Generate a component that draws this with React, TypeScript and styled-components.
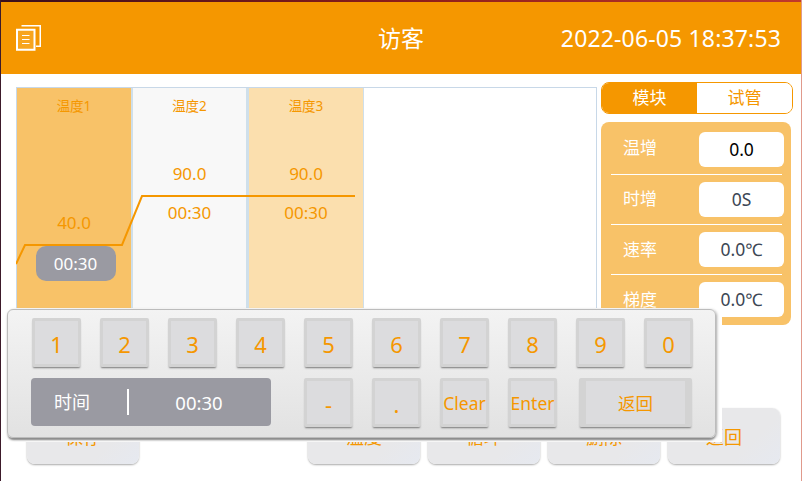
import React from "react";
import styled, { createGlobalStyle } from "styled-components";

const ORANGE = "#f59700";
const FONT = `"Noto Sans", "Noto Sans CJK SC", sans-serif`;

const Global = createGlobalStyle`
  html, body { margin: 0; padding: 0; background: #fff; }
  * { box-sizing: border-box; }
`;

const Screen = styled.div`
  position: relative;
  width: 802px;
  height: 481px;
  overflow: hidden;
  background: #fff;
  font-family: ${FONT};
  border-left: 1px solid #3c1a2a;
  border-right: 1px solid #e09a8c;
  display: flex;
  flex-direction: column;
`;

const TopEdge = styled.div`
  height: 2px;
  margin-left: -1px;
  background: linear-gradient(90deg, #3a0f1c, #8c1d1a 50%, #c0392b);
`;

const Header = styled.header`
  height: 72px;
  background: ${ORANGE};
  color: #fff;
  display: grid;
  grid-template-columns: 1fr auto 1fr;
  align-items: center;
  padding: 0 20px;
`;

const Title = styled.div`
  font-size: 23px;
  line-height: 28px;
  margin-top: -1px;
`;

const Clock = styled.div`
  justify-self: end;
  font-size: 23px;
  letter-spacing: 0.15px;
  line-height: 28px;
  margin-top: -1px;
  white-space: nowrap;
`;

const Main = styled.main`
  flex: 1;
  display: grid;
  grid-template-columns: 581px 192px;
  grid-template-rows: 326px auto;
  column-gap: 4px;
  padding: 8px 0 0 15px;
  align-items: start;
`;

const Chart = styled.div`
  position: relative;
  margin-top: 5px;
  height: 312px;
  border: 1px solid #c8d8e8;
  display: flex;
`;

const Column = styled.div<{ $bg: string; $width: number; $rule: number }>`
  width: ${(p) => p.$width}px;
  background: ${(p) => p.$bg};
  border-right: ${(p) => p.$rule}px solid #cfdfea;
  color: ${ORANGE};
  display: flex;
  flex-direction: column;
  align-items: center;
  text-align: center;
`;

const ColTitle = styled.div`
  margin-top: 8px;
  font-size: 13.5px;
  line-height: 20px;
  height: 20px;
`;

const ColValue = styled.div<{ $top: number }>`
  margin-top: ${(p) => p.$top}px;
  font-size: 17px;
  line-height: 22px;
`;

const ColTime = styled.div`
  margin-top: 17px;
  font-size: 17px;
  line-height: 22px;
`;

const Pill = styled.div`
  margin-top: 12px;
  margin-left: 3px;
  width: 80px;
  height: 35px;
  border-radius: 10px;
  background: #9a9aa2;
  color: #fff;
  font-size: 17px;
  line-height: 35px;
`;

const ChartLine = styled.svg`
  position: absolute;
  left: -1px;
  top: -1px;
  pointer-events: none;
`;

const Actions = styled.div`
  grid-column: 1 / -1;
  margin-left: 11px;
  display: flex;
`;

const ActionButton = styled.button<{ $gap?: number }>`
  flex: none;
  width: 112px;
  height: 56px;
  margin-left: ${(p) => p.$gap ?? 8}px;
  border: 0;
  border-radius: 8px;
  background: linear-gradient(135deg, #e8e8ea, #e8e8ea 70%, #e6e9f0);
  box-shadow: 0 1px 2px #aaa;
  color: ${ORANGE};
  font-family: ${FONT};
  font-size: 18px;
  padding: 0;
`;

const Side = styled.aside`
  display: flex;
  flex-direction: column;
  gap: 8px;
`;

const Tabs = styled.div`
  width: 192px;
  height: 32px;
  border: 1px solid ${ORANGE};
  border-radius: 8px;
  overflow: hidden;
  display: flex;
`;

const Tab = styled.div<{ $active?: boolean }>`
  flex: 1;
  background: ${(p) => (p.$active ? ORANGE : "#fff")};
  color: ${(p) => (p.$active ? "#fff" : ORANGE)};
  font-size: 17px;
  line-height: 30px;
  text-align: center;
`;

const Params = styled.div`
  width: 190px;
  height: 203px;
  border-radius: 8px;
  background: #f8c268;
  padding: 10px 7px 0 10px;
`;

const ParamRow = styled.div`
  height: 50px;
  padding-bottom: 15px;
  padding-left: 12px;
  display: flex;
  align-items: center;
  justify-content: space-between;
  position: relative;
  &:not(:last-child)::after {
    content: "";
    position: absolute;
    left: 0;
    right: 2px;
    bottom: 7px;
    height: 1px;
    background: #fff;
  }
`;

const ParamLabel = styled.div<{ $lift: number }>`
  color: #fff;
  font-size: 17px;
  line-height: 24px;
  padding-bottom: ${(p) => p.$lift}px;
`;

const ParamValue = styled.div<{ $strong?: boolean }>`
  width: 85px;
  height: 35px;
  border-radius: 6px;
  background: #fff;
  color: ${(p) => (p.$strong ? "#000" : "#3c4654")};
  font-size: 17.5px;
  line-height: 35px;
  text-align: center;
`;

const Overlay = styled.div`
  position: absolute;
  left: 0;
  top: 308px;
  width: 721px;
  height: 134px;
  background: #fff;
  padding: 1px 6px 4px 6px;
`;

const Keypad = styled.div`
  height: 129px;
  border: 1px solid #bcbcbc;
  border-radius: 6px;
  background: linear-gradient(180deg, #f3f3f3, #e2e2e2);
  box-shadow: 0 3px 2px -1px #8c8c8c, 1px 1px 3px #aaa;
  padding: 8px 0 0 24px;
  display: flex;
  flex-direction: column;
  gap: 11px;
`;

const KeyRow = styled.div`
  display: flex;
  gap: 19px;
`;

const Key = styled.button<{ $wide?: boolean; $small?: boolean; $offset?: number }>`
  flex: none;
  width: ${(p) => (p.$wide ? 113 : 49)}px;
  height: 49px;
  margin-left: ${(p) => p.$offset ?? 0}px;
  padding: 2px 0 0;
  border: solid #d3d3d3;
  border-width: 3px ${(p) => (p.$wide ? "7px" : "3px")};
  border-radius: 2px;
  background: #dcdcde;
  box-shadow: 0 2px 2px -1px #777;
  color: ${ORANGE};
  font-family: ${FONT};
  font-size: ${(p) => (p.$small ? 17.5 : 22)}px;
  line-height: 1;
  white-space: nowrap;
  display: flex;
  align-items: center;
  justify-content: center;
`;

const Display = styled.div`
  width: 240px;
  height: 48px;
  margin-left: -1px;
  margin-right: 14px;
  border-radius: 4px;
  background: #9a9aa2;
  color: #fff;
  font-size: 18px;
  display: flex;
  align-items: center;
`;

const DisplayLabel = styled.div`
  width: 96px;
  padding-right: 14px;
  text-align: center;
  padding-bottom: 2px;
`;

const DisplayDivider = styled.div`
  width: 2px;
  height: 26px;
  background: #fff;
`;

const DisplayValue = styled.div`
  flex: 1;
  font-size: 18.5px;
  text-align: center;
  padding-right: 2px;
`;

const IconSlot = styled.svg`
  margin-left: -5px;
`;

const DocIcon = () => (
  <IconSlot width="25" height="26" viewBox="0 0 25 26" fill="none" stroke="#fff">
    <path d="M5.5 .75H24.25V21.25H20" strokeWidth="1.5" />
    <rect x="1" y="4.75" width="17.5" height="20" strokeWidth="2" fill="#f7a51e" />
    <path d="M6 10.5H13.5M6 14.5H13.5M6 18.5H13.5" strokeWidth="1.2" />
  </IconSlot>
);

const params = [
  { label: "温增", value: "0.0", strong: true, lift: 4 },
  { label: "时增", value: "0S", lift: 2 },
  { label: "速率", value: "0.0℃", lift: 0 },
  { label: "梯度", value: "0.0℃", lift: 0 },
];

export default function App() {
  return (
    <Screen>
      <Global />
      <TopEdge />
      <Header>
        <DocIcon />
        <Title>访客</Title>
        <Clock>2022-06-05 18:37:53</Clock>
      </Header>
      <Main>
        <Chart>
          <Column $bg="#f8c268" $width={116} $rule={2}>
            <ColTitle>温度1</ColTitle>
            <ColValue $top={96}>40.0</ColValue>
            <Pill>00:30</Pill>
          </Column>
          <Column $bg="#f8f8f8" $width={116} $rule={3}>
            <ColTitle>温度2</ColTitle>
            <ColValue $top={47}>90.0</ColValue>
            <ColTime>00:30</ColTime>
          </Column>
          <Column $bg="#fbdfae" $width={115} $rule={1}>
            <ColTitle>温度3</ColTitle>
            <ColValue $top={47}>90.0</ColValue>
            <ColTime>00:30</ColTime>
          </Column>
          <ChartLine width="360" height="200" viewBox="0 0 360 200" fill="none">
            <path d="M0 177L9 158H106L126 109H339" stroke={ORANGE} strokeWidth="2" />
          </ChartLine>
        </Chart>
        <Side>
          <Tabs>
            <Tab $active>模块</Tab>
            <Tab>试管</Tab>
          </Tabs>
          <Params>
            {params.map((p) => (
              <ParamRow key={p.label}>
                <ParamLabel $lift={p.lift}>{p.label}</ParamLabel>
                <ParamValue $strong={p.strong}>{p.value}</ParamValue>
              </ParamRow>
            ))}
          </Params>
        </Side>
        <Actions>
          <ActionButton $gap={0}>保存</ActionButton>
          <ActionButton $gap={169}>温度</ActionButton>
          <ActionButton>循环</ActionButton>
          <ActionButton>删除</ActionButton>
          <ActionButton>返回</ActionButton>
        </Actions>
      </Main>
      <Overlay>
        <Keypad>
          <KeyRow>
            {["1", "2", "3", "4", "5", "6", "7", "8", "9", "0"].map((k) => (
              <Key key={k}>{k}</Key>
            ))}
          </KeyRow>
          <KeyRow>
            <Display>
              <DisplayLabel>时间</DisplayLabel>
              <DisplayDivider />
              <DisplayValue>00:30</DisplayValue>
            </Display>
            <Key>-</Key>
            <Key>.</Key>
            <Key $small>Clear</Key>
            <Key $small>Enter</Key>
            <Key $wide $small $offset={3}>返回</Key>
          </KeyRow>
        </Keypad>
      </Overlay>
    </Screen>
  );
}
